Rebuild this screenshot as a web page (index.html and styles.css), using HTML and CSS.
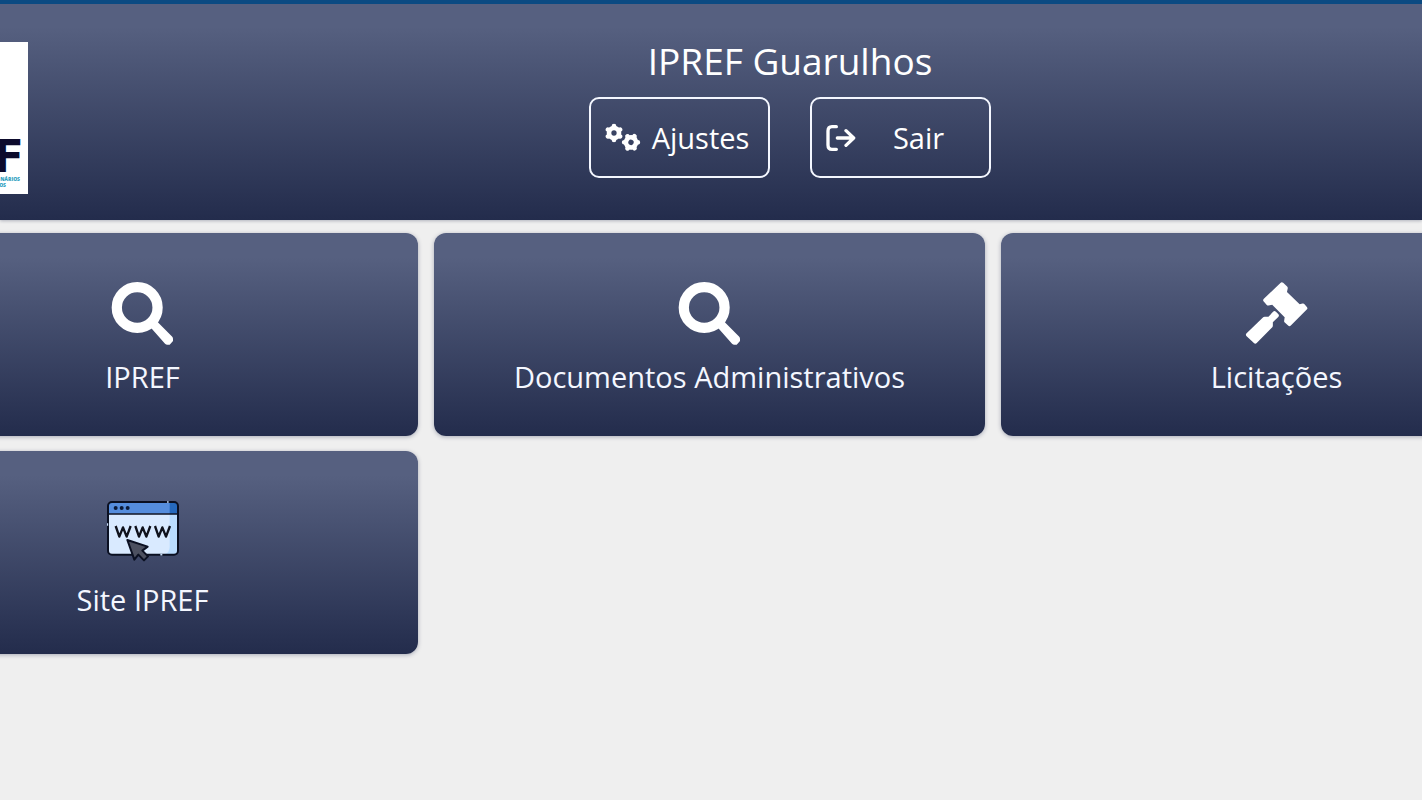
FILE: index.html
```html
<!DOCTYPE html>
<html lang="pt-BR">
<head>
<meta charset="utf-8">
<meta name="viewport" content="width=device-width, initial-scale=1">
<title>IPREF Guarulhos</title>
<link rel="stylesheet" href="styles.css">
</head>
<body>
<header class="topbar">
  <div class="frame topbar-inner">
    <div class="logo">
      <span class="logo-name">IPREF</span>
      <span class="logo-sub">NÁRIOS</span>
      <span class="logo-sub logo-sub-end">OS</span>
    </div>
    <div class="account">
      <h1 class="title">IPREF Guarulhos</h1>
      <div class="actions">
        <button class="action" type="button">
          <svg class="icon-gears" viewBox="0 0 108 90" aria-hidden="true">
            <defs>
              <g id="gear" fill="none" stroke="#fff" stroke-linecap="round">
                <circle r="15" stroke-width="14"/>
                <path stroke-width="14" d="M0-17V-21M0 17V21M15-8L18-10M-15 8L-18 10M15 8L18 10M-15-8L-18-10"/>
              </g>
            </defs>
            <use href="#gear" x="27" y="30"/>
            <use href="#gear" transform="translate(78 58) rotate(30)"/>
          </svg>
          <span class="action-text">Ajustes</span>
        </button>
        <button class="action" type="button">
          <svg class="icon-exit" viewBox="0 0 90 78" aria-hidden="true">
            <g fill="none" stroke="#fff" stroke-width="10" stroke-linecap="round" stroke-linejoin="round">
              <path d="M31 5H18Q6 5 6 18V60Q6 73 18 73H31"/>
              <path d="M34 39H82M60 17L83 39L60 61"/>
            </g>
          </svg>
          <span class="action-text">Sair</span>
        </button>
      </div>
    </div>
  </div>
</header>
<main class="frame cards">
  <a class="card" href="#ipref">
    <svg class="icon" viewBox="66 33 188 190" aria-hidden="true">
      <circle cx="144" cy="110" r="61.500" fill="none" stroke="#fff" stroke-width="31"/>
      <path d="M180 165L198 146L249 197Q252 200 252 204V211L242 222H235Q231 222 228 219Z" fill="#fff"/>
    </svg>
    <span class="label">IPREF</span>
  </a>
  <a class="card" href="#documentos">
    <svg class="icon" viewBox="66 33 188 190" aria-hidden="true">
      <circle cx="144" cy="110" r="61.500" fill="none" stroke="#fff" stroke-width="31"/>
      <path d="M180 165L198 146L249 197Q252 200 252 204V211L242 222H235Q231 222 228 219Z" fill="#fff"/>
    </svg>
    <span class="label">Documentos Administrativos</span>
  </a>
  <a class="card" href="#licitacoes">
    <svg class="icon" viewBox="168 50 190 190" aria-hidden="true">
      <g fill="#fff" stroke="#fff" stroke-width="12" stroke-linejoin="round">
        <path d="M279 57L291 68L288 82L331 124L343 121L350 129L302 177L292 168L294 154L252 112L238 115L229 105Z"/>
        <path d="M257 144L264 151L246 169V182L199 230L177 209L227 161H241Z"/>
      </g>
    </svg>
    <span class="label">Licitações</span>
  </a>
  <a class="card" href="#site">
    <svg class="icon-site" viewBox="0 0 216 204" aria-hidden="true">
      <rect x="3" y="6" width="210" height="158" rx="12" fill="#d9eaff"/>
      <path d="M188 8H201Q212 8 212 20V152Q212 163 201 163H172Q188 158 188 140Z" fill="#b9dcff"/>
      <path d="M3 41V18Q3 6 15 6H201Q213 6 213 18V41Z" fill="#558ddd"/>
      <path d="M188 6H201Q213 6 213 18V41H188Z" fill="#2669bd"/>
      <rect x="3" y="6" width="210" height="158" rx="12" fill="none" stroke="#0b1022" stroke-width="6"/>
      <path d="M3 42H213" stroke="#0b1022" stroke-width="5"/>
      <path d="M1 70V77M160 164H166M180 6H185" stroke="#c7dcf7" stroke-width="5"/>
      <g fill="#0b1a38"><circle cx="26" cy="24" r="6"/><circle cx="44" cy="24" r="6"/><circle cx="62" cy="24" r="6"/></g>
      <path d="M26 78L37 110L48 82L59 110L71 78M85 78L96 110L107 82L118 110L130 78M144 78L155 110L166 82L177 110L189 78" fill="none" stroke="#10121c" stroke-width="7" stroke-linejoin="round"/>
      <path d="M61 120L122 140L106 152L123 169L111 181L94 164L82 179Z" fill="#4c5060" stroke="#0b1022" stroke-width="6" stroke-linejoin="round"/>
    </svg>
    <span class="label">Site IPREF</span>
  </a>
</main>
</body>
</html>
```
FILE: styles.css
```css
* {
  box-sizing: border-box;
}

body {
  margin: 0;
  min-height: 100vh;
  overflow: hidden;
  background: #efefef;
  color: #fff;
  font-family: "Open Sans", "Noto Sans", sans-serif;
}

/* The dashboard is wider than the window on both sides. */
.frame {
  margin: 0 -130px 0 -133px;
}

.topbar {
  border-top: 4px solid #0b4a82;
  background: linear-gradient(#566080 12%, #232c4c);
  background-origin: border-box;
  box-shadow: 0 1px 3px rgba(35, 44, 76, 0.3);
}

.topbar-inner {
  display: flex;
  align-items: flex-start;
  padding: 38px 0 26px 9px;
}

.logo {
  display: flex;
  flex-direction: column;
  justify-content: flex-end;
  align-items: flex-end;
  width: 152px;
  height: 152px;
  padding: 0 4px 6px 0;
  background: #fff;
}

.logo-name {
  color: #0d0b2c;
  font: 700 45px/38px "DejaVu Sans", sans-serif;
}

.logo-sub {
  padding-right: 4px;
  color: #2f9fc0;
  font: 800 5px/6px "Open Sans", sans-serif;
}

.logo-sub-end {
  padding-right: 18px;
}

.account {
  flex: 1;
  display: flex;
  flex-direction: column;
  align-items: center;
}

.title {
  margin: 0;
  font-size: 37px;
  font-weight: 500;
  line-height: 38px;
}

.actions {
  display: flex;
  gap: 40px;
  margin-top: 17px;
}

.action {
  display: flex;
  align-items: center;
  width: 181px;
  height: 81px;
  padding: 0 16px 0 14px;
  border: 2px solid #f4f7ff;
  border-radius: 10px;
  background: transparent;
  color: #fff;
  font-family: inherit;
  font-size: 29px;
  font-weight: 500;
  line-height: 40px;
}

.action-text {
  flex: 1;
  padding-left: 8px;
  text-align: center;
}

.icon-gears {
  width: 36px;
  height: 30px;
}

.icon-exit {
  width: 30px;
  height: 26px;
}

.cards {
  display: grid;
  grid-template-columns: repeat(3, 1fr);
  gap: 15px 16px;
  padding-top: 13px;
}

.card {
  display: flex;
  flex-direction: column;
  align-items: center;
  gap: 12px;
  min-height: 203px;
  padding: 49px 16px 32px;
  border-radius: 12px;
  background: linear-gradient(#566080 12%, #232c4c);
  box-shadow: 0 1px 4px rgba(35, 44, 76, 0.35);
  color: #f4f7ff;
  text-decoration: none;
}

.icon {
  width: 63px;
  height: 63px;
}

.icon-site {
  width: 72px;
  height: 68px;
}

.label {
  font-size: 29px;
  line-height: 40px;
}
```
